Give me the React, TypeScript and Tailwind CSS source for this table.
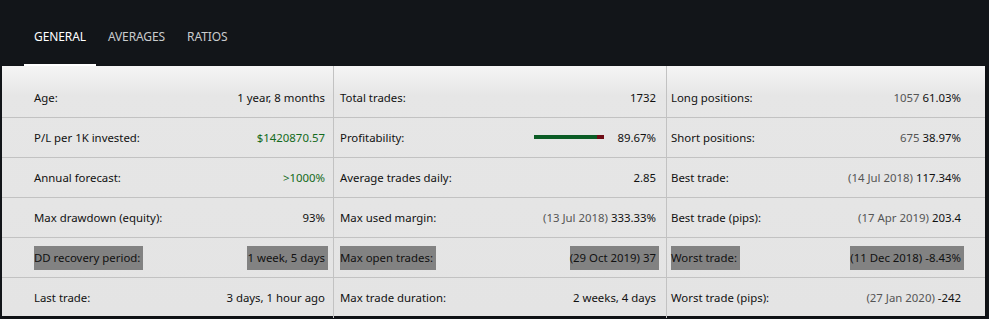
import React from "react";

type Cell = {
  label: string;
  value: React.ReactNode;
  hl?: boolean;
};

const G = ({ children }: { children: React.ReactNode }) => (
  <span className="text-[#555555]">{children}</span>
);

const col1: Cell[] = [
  { label: "Age:", value: "1 year, 8 months" },
  { label: "P/L per 1K invested:", value: <span className="text-[#136a20]">$1420870.57</span> },
  { label: "Annual forecast:", value: <span className="text-[#136a20]">&gt;1000%</span> },
  { label: "Max drawdown (equity):", value: "93%" },
  { label: "DD recovery period:", value: "1 week, 5 days", hl: true },
  { label: "Last trade:", value: "3 days, 1 hour ago" },
];

const col2: Cell[] = [
  { label: "Total trades:", value: "1732" },
  {
    label: "Profitability:",
    value: (
      <span className="flex items-center">
        <span className="flex h-[4px] w-[70px] mr-[13px]">
          <span className="h-full w-[63px] bg-[#0b5c25]" />
          <span className="h-full flex-1 bg-[#6e0d16]" />
        </span>
        <span>89.67%</span>
      </span>
    ),
  },
  { label: "Average trades daily:", value: "2.85" },
  { label: "Max used margin:", value: <><G>(13 Jul 2018)</G> 333.33%</> },
  { label: "Max open trades:", value: "(29 Oct 2019) 37", hl: true },
  { label: "Max trade duration:", value: "2 weeks, 4 days" },
];

const col3: Cell[] = [
  { label: "Long positions:", value: <><G>1057</G> 61.03%</> },
  { label: "Short positions:", value: <><G>675</G> 38.97%</> },
  { label: "Best trade:", value: <><G>(14 Jul 2018)</G> 117.34%</> },
  { label: "Best trade (pips):", value: <><G>(17 Apr 2019)</G> 203.4</> },
  { label: "Worst trade:", value: "(11 Dec 2018) -8.43%", hl: true },
  { label: "Worst trade (pips):", value: <><G>(27 Jan 2020)</G> -242</> },
];

function Column({ cells, pad, last }: { cells: Cell[]; pad: string; last?: boolean }) {
  return (
    <div className={`flex flex-col pt-[12px] ${last ? "flex-1" : "border-r border-[#c2c2c2]"}`}>
      {cells.map((c, i) => (
        <div
          key={c.label}
          className={`flex h-[40px] items-center justify-between ${pad} ${
            i < cells.length - 1 ? "border-b border-[#c2c2c2]" : ""
          }`}
        >
          {c.hl ? (
            <>
              <span className="bg-[#828282] pr-[3px] leading-[24px]">{c.label}</span>
              <span className="bg-[#828282] pr-[3px] -mr-[3px] leading-[24px]">{c.value}</span>
            </>
          ) : (
            <>
              <span>{c.label}</span>
              <span>{c.value}</span>
            </>
          )}
        </div>
      ))}
    </div>
  );
}

export default function App() {
  return (
    <div
      className="w-[989px] h-[319px] bg-[#121519] overflow-hidden"
      style={{ fontFamily: '"Noto Sans", "Open Sans", sans-serif' }}
    >
      <div className="h-[66px] flex items-end pl-[24px] gap-[2px]">
        {["GENERAL", "AVERAGES", "RATIOS"].map((t, i) => (
          <div
            key={t}
            className={`h-[66px] flex items-center px-[10px] pt-[10px] text-[12px] tracking-[-0.1px] ${
              i === 0 ? "text-white border-b-2 border-white" : "text-[#c9cbcd] border-b-2 border-transparent"
            }`}
          >
            {t}
          </div>
        ))}
      </div>
      <div className="ml-[2px] mr-[4px] h-[250px] flex text-[11.4px] text-[#111111] bg-gradient-to-b from-[#f5f5f5] via-[#e6e6e6] via-[12%] to-[#e4e4e4] shadow-[2px_2px_3px_rgba(0,0,0,0.25)]">
        <div className="w-[332px] flex flex-col">
          <Column cells={col1} pad="pl-[32px] pr-[8px]" />
        </div>
        <div className="w-[333px] flex flex-col">
          <Column cells={col2} pad="pl-[6px] pr-[10px]" />
        </div>
        <div className="flex-1 flex flex-col">
          <Column cells={col3} pad="pl-[4px] pr-[24px]" last />
        </div>
      </div>
    </div>
  );
}
